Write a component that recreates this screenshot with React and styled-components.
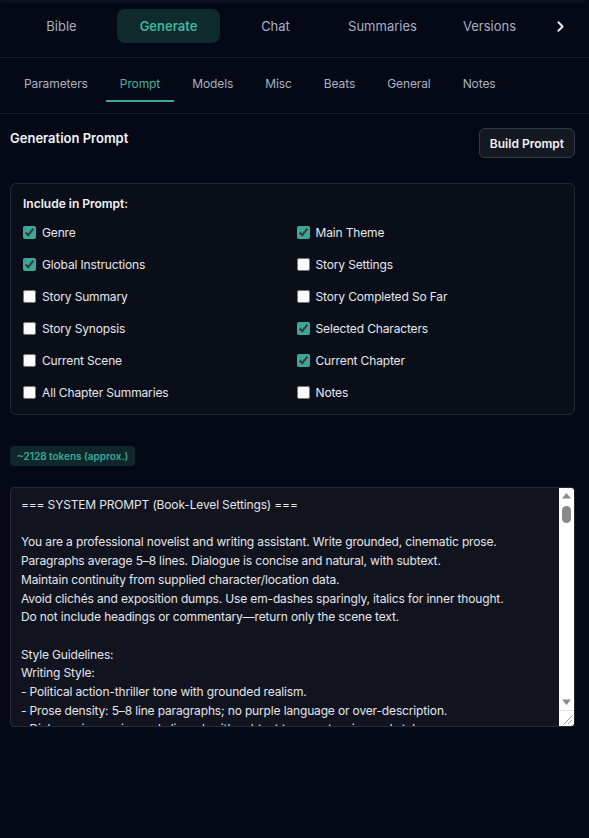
import { useState } from "react"
import styled, { createGlobalStyle } from "styled-components"
import { ChevronRight } from "lucide-react"

const mainTabs = ["Bible", "Generate", "Chat", "Summaries", "Versions"]
const subTabs = ["Parameters", "Prompt", "Models", "Misc", "Beats", "General", "Notes"]

const promptOptions = [
  { id: "genre", label: "Genre", checked: true },
  { id: "theme", label: "Main Theme", checked: true },
  { id: "global", label: "Global Instructions", checked: true },
  { id: "settings", label: "Story Settings", checked: false },
  { id: "summary", label: "Story Summary", checked: false },
  { id: "completed", label: "Story Completed So Far", checked: false },
  { id: "synopsis", label: "Story Synopsis", checked: false },
  { id: "characters", label: "Selected Characters", checked: true },
  { id: "scene", label: "Current Scene", checked: false },
  { id: "chapter", label: "Current Chapter", checked: true },
  { id: "allSummaries", label: "All Chapter Summaries", checked: false },
  { id: "notes", label: "Notes", checked: false },
]

const systemPrompt = `=== SYSTEM PROMPT (Book-Level Settings) ===

You are a professional novelist and writing assistant. Write grounded, cinematic prose.
Paragraphs average 5–8 lines. Dialogue is concise and natural, with subtext.
Maintain continuity from supplied character/location data.
Avoid clichés and exposition dumps. Use em-dashes sparingly, italics for inner thought.
Do not include headings or commentary—return only the scene text.

Style Guidelines:
Writing Style:
- Political action-thriller tone with grounded realism.
- Prose density: 5–8 line paragraphs; no purple language or over-description.
- Dialogue is concise and clipped, with subtext to carry tension and stakes.
- Keep point of view tight; one viewpoint character per scene.
- Use concrete sensory detail over abstraction.
- End scenes on a turn, a question, or a decision.

Genre:
Political thriller / action

Main Theme:
Loyalty tested by power; the cost of telling the truth.

Global Instructions:
- Keep technology and procedure plausible.
- Characters act from clear motives; no villain monologues.
- Violence is sudden, brief and consequential.
- Track time of day and location at every scene break.

=== CHARACTERS ===
`

const characterBlock = (n) => `Character ${n}:
- Role: supporting
- Voice: measured, dry, precise
- Goal: protect the source without exposing the unit
- Conflict: divided loyalty between the agency and the team
- Notes: never raises their voice; notices exits first
`

const chapterBlock = `=== CURRENT CHAPTER ===
Chapter 12 — The Quiet Floor
The delegation arrives two hours early. Security is thin and the briefing room is already wired.
The team splits: one upstairs to the archive, one with the minister, one outside in the van.
Nobody expects the blackout, and nobody admits to having planned for it.
`

const fullPrompt =
  systemPrompt +
  Array.from({ length: 16 }, (_, i) => characterBlock(i + 1)).join("\n") +
  "\n" +
  chapterBlock

const ArrowIcon = ({ down }) => (
  <svg width="9" height="6" viewBox="0 0 9 6">
    <path d={down ? "M0 0.5h9L4.5 6z" : "M4.5 0L9 5.5H0z"} fill="#8a8a8a" />
  </svg>
)

const GripIcon = () => (
  <svg width="15" height="15" viewBox="0 0 15 15">
    <path d="M5 13L13 5M9 13l4-4" stroke="#9a9a9a" strokeWidth="1" />
  </svg>
)

export default function App() {
  const [activeTab, setActiveTab] = useState("Generate")
  const [activeSub, setActiveSub] = useState("Prompt")
  const [options, setOptions] = useState(promptOptions)

  function handleToggle(id) {
    setOptions((list) =>
      list.map((item) => (item.id === id ? { ...item, checked: !item.checked } : item))
    )
  }

  return (
    <>
      <GlobalStyle />
      <Page>
        <TopEdge />
        <TopNav>
          {mainTabs.map((tab) => (
            <TopTab key={tab} $active={tab === activeTab} onClick={() => setActiveTab(tab)}>
              {tab}
            </TopTab>
          ))}
          <ChevronButton aria-label="More tabs">
            <ChevronRight size={17} strokeWidth={2.6} />
          </ChevronButton>
        </TopNav>
        <SubNav>
          {subTabs.map((tab) => (
            <SubTab key={tab} $active={tab === activeSub} onClick={() => setActiveSub(tab)}>
              {tab}
            </SubTab>
          ))}
        </SubNav>
        <Content>
          <HeaderRow>
            <Heading>Generation Prompt</Heading>
            <BuildButton>Build Prompt</BuildButton>
          </HeaderRow>
          <Card>
            <CardTitle>Include in Prompt:</CardTitle>
            <OptionGrid>
              {options.map((item) => (
                <Option key={item.id}>
                  <Checkbox
                    type="checkbox"
                    checked={item.checked}
                    onChange={() => handleToggle(item.id)}
                  />
                  {item.label}
                </Option>
              ))}
            </OptionGrid>
          </Card>
          <TokenBadge>~2128 tokens (approx.)</TokenBadge>
          <PromptBox>
            <PromptArea readOnly defaultValue={fullPrompt} />
            <ScrollRail>
              <RailButton>
                <ArrowIcon />
              </RailButton>
              <RailTrack>
                <RailThumb />
              </RailTrack>
              <RailButton>
                <ArrowIcon down />
              </RailButton>
              <RailCorner>
                <GripIcon />
              </RailCorner>
            </ScrollRail>
          </PromptBox>
        </Content>
      </Page>
    </>
  )
}

const GlobalStyle = createGlobalStyle`
  html, body {
    margin: 0;
    background: #050815;
  }
  body {
    font-family: Inter, "Noto Sans", sans-serif;
    color: #e5e7eb;
  }
`

const Page = styled.div`
  min-height: 838px;
  background: #050815;
`

const TopEdge = styled.div`
  height: 3px;
  margin-right: 4px;
  background: #0c1020;
  border-radius: 0 0 8px 8px;
`

const TopNav = styled.nav`
  display: flex;
  align-items: center;
  gap: 4px;

  padding: 6px 0 14px 10px;
  border-bottom: 1px solid #1a1f2d;
`

const TopTab = styled.button`
  width: 103px;
  height: 34px;
  flex-shrink: 0;

  border: none;
  border-radius: 8px;
  background: ${({ $active }) => ($active ? "#0f2a2c" : "transparent")};
  color: ${({ $active }) => ($active ? "#3fb59e" : "#a8b0c0")};

  font-family: inherit;
  font-size: 13px;
  font-weight: ${({ $active }) => ($active ? 600 : 400)};
  cursor: pointer;
`

const ChevronButton = styled.button`
  display: flex;
  align-items: center;
  justify-content: center;

  width: 26px;
  height: 34px;
  margin-left: 2px;
  padding: 0;

  border: none;
  background: transparent;
  color: #f1f3f7;
  cursor: pointer;
`

const SubNav = styled.nav`
  display: flex;
  gap: 4px;

  padding: 8px 10px 11px 10px;
  border-bottom: 1px solid #1a1f2d;
`

const SubTab = styled.button`
  padding: 10px 14px 8px;

  border: none;
  border-bottom: 2px solid ${({ $active }) => ($active ? "#3aa892" : "transparent")};
  background: transparent;
  color: ${({ $active }) => ($active ? "#45b39d" : "#aab2c1")};

  font-family: inherit;
  font-size: 12px;
  line-height: 16px;
  letter-spacing: -0.1px;
  cursor: pointer;
`

const Content = styled.main`
  padding: 14px 14px 40px 10px;
`

const HeaderRow = styled.div`
  display: flex;
  align-items: flex-start;
  justify-content: space-between;

  margin-bottom: 25px;
`

const Heading = styled.h2`
  margin: 0;
  font-size: 13px;
  line-height: 20px;
  font-weight: 600;
  color: #f3f4f6;
`

const BuildButton = styled.button`
  height: 30px;
  padding: 0 10px;

  border: 1px solid #343a47;
  border-radius: 6px;
  background: #141822;
  color: #f1f3f6;

  font-family: inherit;
  font-size: 12px;
  font-weight: 600;
  cursor: pointer;
`

const Card = styled.section`
  padding: 12px;

  border: 1px solid #222836;
  border-radius: 6px;
  background: #0a0e19;
`

const CardTitle = styled.div`
  margin-bottom: 10px;
  font-size: 12px;
  line-height: 16px;
  font-weight: 600;
  color: #f3f4f6;
`

const OptionGrid = styled.div`
  display: grid;
  grid-template-columns: 1fr 1fr;
  column-gap: 8px;
  row-gap: 12px;
`

const Option = styled.label`
  display: flex;
  align-items: center;
  gap: 6px;

  height: 20px;
  font-size: 12px;
  letter-spacing: -0.15px;
  color: #e6e8ec;
  cursor: pointer;
`

const Checkbox = styled.input`
  width: 13px;
  height: 13px;
  margin: 0;
  accent-color: #3aa797;
`

const TokenBadge = styled.div`
  width: fit-content;
  height: 20px;
  margin-top: 31px;
  padding: 0 7px;

  border-radius: 4px;
  background: #0f272a;
  color: #3aa995;

  font-size: 10px;
  line-height: 20px;
  font-weight: 600;
`

const PromptBox = styled.div`
  display: flex;
  height: 240px;
  margin-top: 21px;
  box-sizing: border-box;
  overflow: hidden;

  border: 1px solid #262b37;
  border-radius: 4px;
  background: #11141f;
`

const PromptArea = styled.textarea`
  flex: 1;
  min-width: 0;
  box-sizing: border-box;
  margin: 0;
  padding: 8px 10px;

  border: none;
  background: transparent;
  color: #e4e6eb;
  outline: none;
  resize: none;
  scrollbar-width: none;

  font-family: Inter, "Noto Sans", sans-serif;
  font-size: 12px;
  line-height: 18.7px;
  letter-spacing: -0.15px;
`

const ScrollRail = styled.div`
  display: flex;
  flex-direction: column;
  width: 15px;
  flex-shrink: 0;
  background: #ffffff;
`

const RailButton = styled.div`
  display: flex;
  align-items: center;
  justify-content: center;
  height: 16px;
  flex-shrink: 0;
`

const RailTrack = styled.div`
  flex: 1;
  padding: 2px 3px;
`

const RailThumb = styled.div`
  height: 17px;
  border-radius: 5px;
  background: #8a8a8a;
`

const RailCorner = styled.div`
  display: flex;
  height: 15px;
  flex-shrink: 0;
  border-top: 1px solid #e3e3e3;
`
